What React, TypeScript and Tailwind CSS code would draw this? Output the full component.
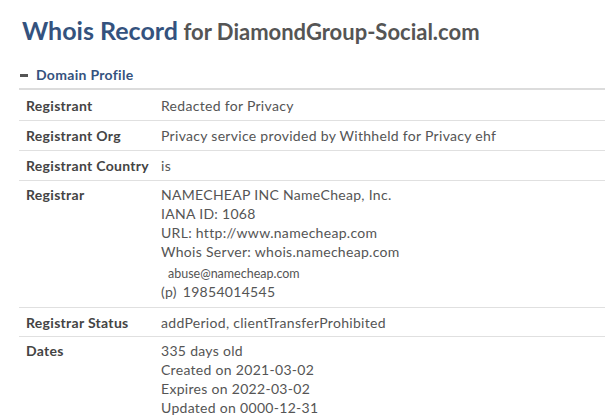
const rows: { label: string; value: string }[] = [
  { label: 'Registrant', value: 'Redacted for Privacy' },
  { label: 'Registrant Org', value: 'Privacy service provided by Withheld for Privacy ehf' },
  { label: 'Registrant Country', value: 'is' },
];

const Row = ({ label, children }: { label: string; children: React.ReactNode }) => (
  <div className="flex border-t border-[#e0e0e0] pt-[4px] pb-[7px]">
    <div className="w-[142px] shrink-0 pl-[7px] font-bold text-[#444] leading-[19px]">{label}</div>
    <div className="leading-[19px] text-[#555]">{children}</div>
  </div>
);

export default function App() {
  return (
    <div className="min-h-[420px] bg-white font-['Lato',sans-serif] text-[14px] tracking-[0.3px] pl-[19px] overflow-hidden">
      <h1 className="pt-[14px] pl-[3px] leading-[32px] whitespace-nowrap tracking-normal">
        <span className="text-[25px] font-bold text-[#34527e]">Whois Record</span>{' '}
        <span className="text-[22px] font-bold text-[#555] ml-[2px]">for DiamondGroup-Social.com</span>
      </h1>
      <div className="mt-[15px] flex items-center gap-[8px] pl-[1px] font-bold text-[14px] tracking-[0.3px] text-[#34527e] leading-[18px]">
        <span className="inline-block w-[8px] h-[3px] bg-[#555]" />
        <span>Domain Profile</span>
      </div>
      <div className="mt-[4px] border-t-2 border-[#dcdcdc]">
        {rows.map((r, i) => (
          <div key={r.label} className={`flex ${i > 0 ? 'border-t border-[#e0e0e0]' : ''} h-[30px] items-center`}>
            <div className="w-[142px] shrink-0 pl-[7px] font-bold text-[#444]">{r.label}</div>
            <div className="text-[#555]">{r.value}</div>
          </div>
        ))}
        <Row label="Registrar">
          <div>NAMECHEAP INC NameCheap, Inc.</div>
          <div>IANA ID: 1068</div>
          <div>URL: http://www.namecheap.com</div>
          <div>Whois Server: whois.namecheap.com</div>
          <div className="pl-[7px] text-[12.5px] tracking-normal mt-[5px] leading-[16px]">abuse@namecheap.com</div>
          <div className="flex gap-[6px] leading-[17px] mt-[1px]">
            <span>(p)</span>
            <span>19854014545</span>
          </div>
        </Row>
        <div className="flex border-t border-[#e0e0e0] h-[29px] items-center">
          <div className="w-[142px] shrink-0 pl-[7px] font-bold text-[#444]">Registrar Status</div>
          <div className="text-[#555]">addPeriod, clientTransferProhibited</div>
        </div>
        <Row label="Dates">
          <div>335 days old</div>
          <div>Created on 2021-03-02</div>
          <div>Expires on 2022-03-02</div>
          <div>Updated on 0000-12-31</div>
        </Row>
      </div>
    </div>
  );
}
